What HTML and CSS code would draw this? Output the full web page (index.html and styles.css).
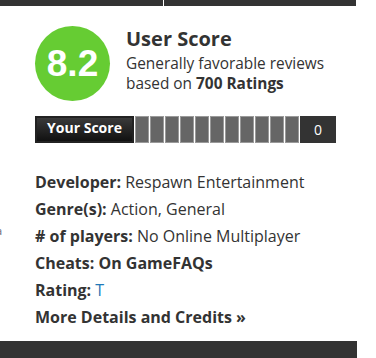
FILE: index.html
```html
<!DOCTYPE html>
<html>
<head>
    <meta charset="UTF-8" />
    <title>User Score</title>
    <link rel="stylesheet" href="styles.css">
</head>
<body>
<div class="topbar">
    <div class="topbar_left"></div>
    <div class="topbar_right"></div>
</div>

<div class="module">
    <div class="side"><span class="side_cut">a</span></div>

    <div class="main">
        <div class="summary">
            <div class="metascore">8.2</div>
            <div class="summary_text">
                <div class="label">User Score</div>
                <div class="desc">Generally favorable reviews</div>
                <div class="desc">based on <strong>700 Ratings</strong></div>
            </div>
        </div>

        <div class="your_score">
            <div class="your_score_label">Your Score</div>
            <ul class="score_steps">
                <li></li><li></li><li></li><li></li><li></li><li></li>
                <li></li><li></li><li></li><li></li><li></li>
            </ul>
            <div class="your_score_value">0</div>
        </div>

        <ul class="details">
            <li><span class="key">Developer:</span> Respawn Entertainment</li>
            <li><span class="key">Genre(s):</span> Action, General</li>
            <li><span class="key"># of players:</span> No Online Multiplayer</li>
            <li><span class="key">Cheats:</span> <a href="#" class="strong_link">On GameFAQs</a></li>
            <li><span class="key">Rating:</span> <a href="#">T</a></li>
            <li><a href="#" class="strong_link">More Details and Credits &raquo;</a></li>
        </ul>
    </div>
</div>

<div class="bottombar"></div>
</body>
</html>
```

FILE: styles.css
```css
* {
    margin : 0px;
    padding : 0px;
    box-sizing : border-box;
}

body {
    font-family : "Open Sans", Lato, sans-serif;
    color : #333;
    background : #fff;
}

ul {
    list-style : none;
}

a {
    color : #1f79b8;
    text-decoration : none;
}

.topbar {
    display : flex;
    width : 356px;
    height : 6px;
    gap : 1px;
}

.topbar_left { width : 163px; background : #333; }
.topbar_right { flex : 1; background : #333; }

.module {
    display : flex;
    height : 335px;
}

.side {
    width : 35px;
    overflow : hidden;
    padding-top : 217px;
}

.side_cut {
    display : block;
    margin-left : -4px;
    font-size : 11px;
    color : #667;
}

.main {
    padding-top : 20px;
}

.summary {
    display : flex;
    gap : 16px;
}

.metascore {
    width : 75px;
    height : 75px;
    border-radius : 50%;
    background : #66cc33;
    color : #fff;
    font-family : "Liberation Sans", Arial, sans-serif;
    font-size : 37px;
    font-weight : bold;
    display : flex;
    align-items : center;
    justify-content : center;
}

.summary_text {
    padding-top : 1px;
}

.label {
    font-size : 20px;
    font-weight : 700;
    line-height : 24px;
    margin-bottom : 3px;
}

.desc {
    font-size : 15.4px;
    line-height : 20px;
}

.desc strong {
    font-weight : 700;
}

.your_score {
    display : flex;
    margin-top : 15px;
    height : 27px;
}

.your_score_label {
    width : 99px;
    background : linear-gradient(#3a3a3a, #111);
    border : 2px solid #222;
    color : #fff;
    font-size : 14px;
    font-weight : bold;
    text-align : center;
    line-height : 19px;
}

.score_steps {
    display : flex;
    margin-left : 1px;
}

.score_steps > li {
    width : 14px;
    margin-right : 1px;
    background : #666;
    border : 1px solid #999;
}

.your_score_value {
    width : 36px;
    background : #333;
    color : #fff;
    font-size : 14px;
    text-align : center;
    line-height : 28px;
}

.details {
    margin-top : 26px;
}

.details > li {
    font-size : 16px;
    line-height : 27px;
}

.key,
.strong_link {
    font-weight : 700;
    color : #333;
}

.bottombar {
    width : 357px;
    height : 17px;
    background : #333;
}
```
